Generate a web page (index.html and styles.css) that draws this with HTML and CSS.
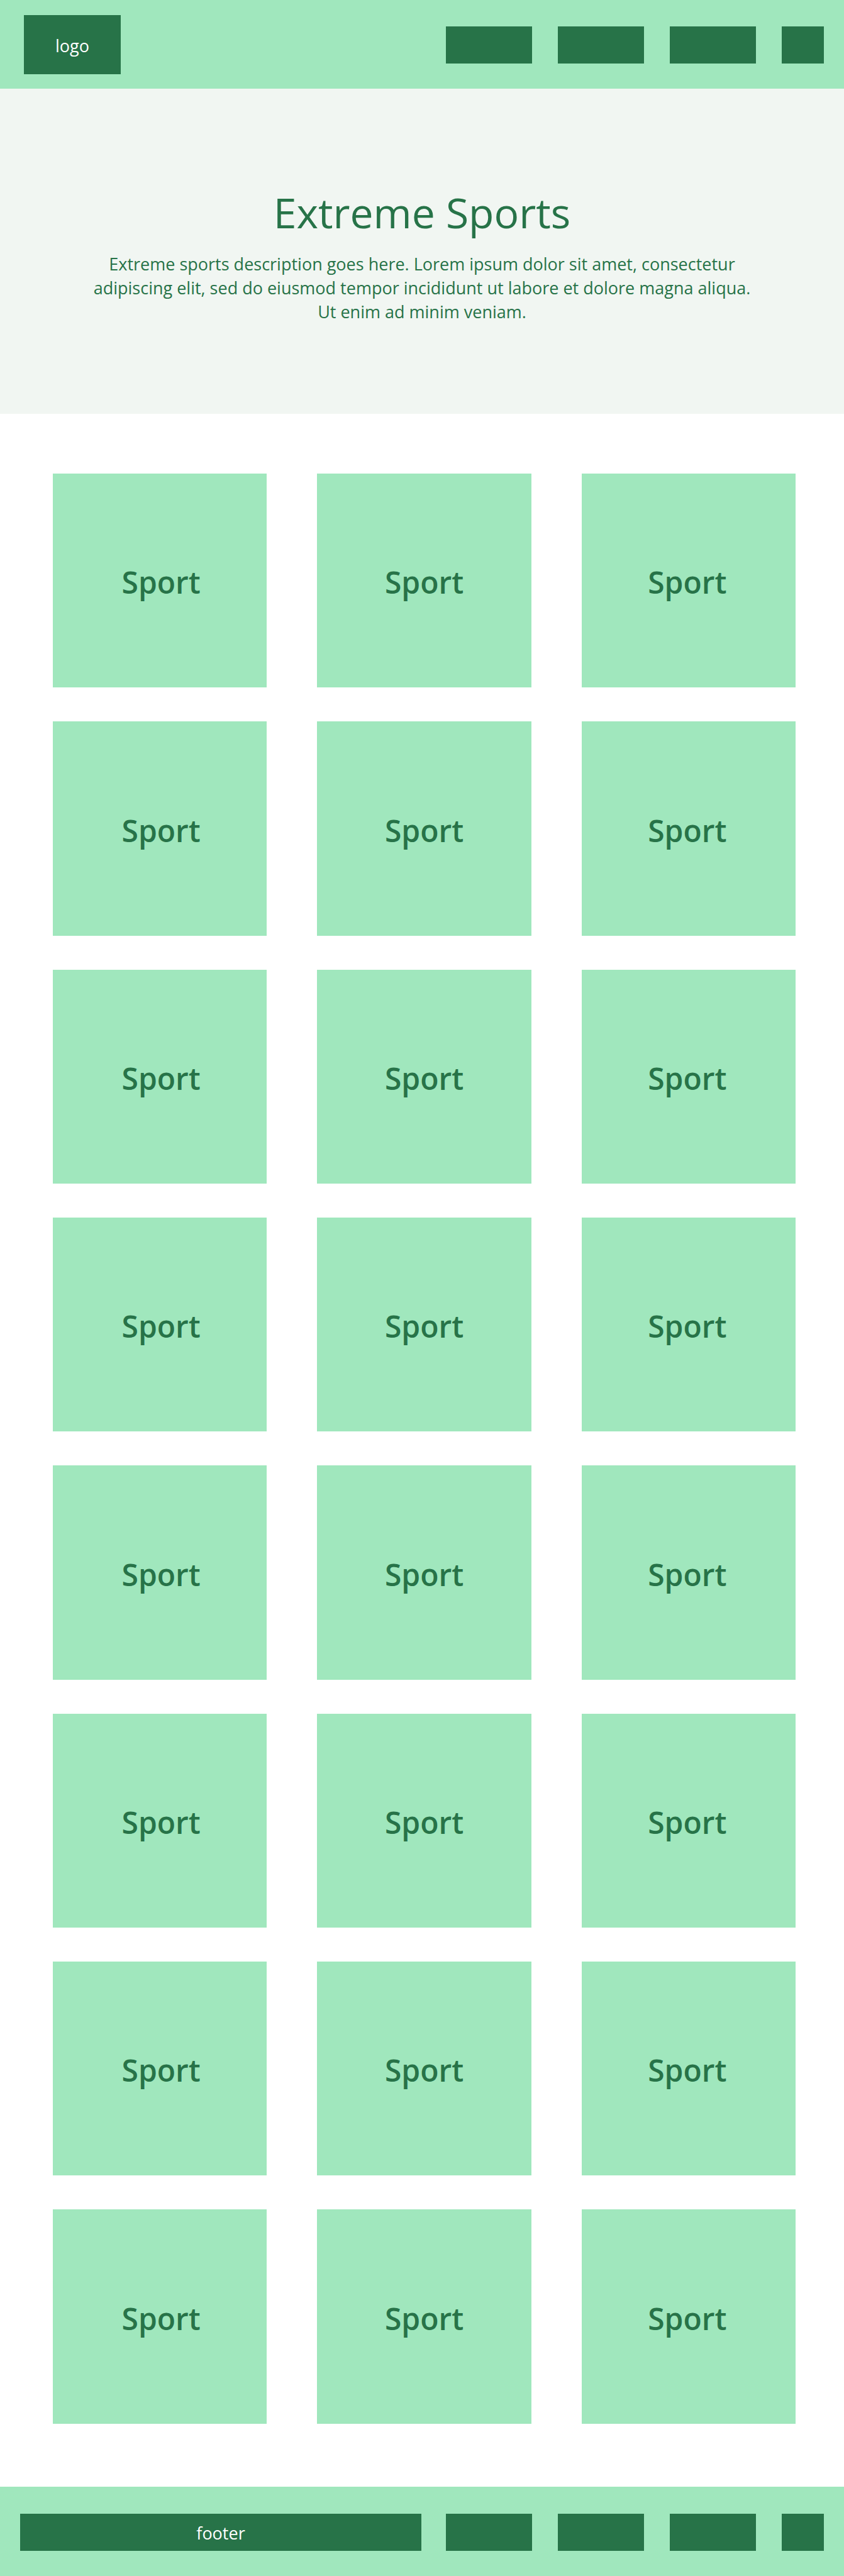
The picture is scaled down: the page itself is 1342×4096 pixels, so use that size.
FILE: index.html
```html
<!DOCTYPE html>
<html lang="en">
<head>
<meta charset="utf-8">
<meta name="viewport" content="width=device-width, initial-scale=1">
<title>Extreme Sports</title>
<link rel="stylesheet" href="styles.css">
</head>
<body>
<header class="bar">
  <a class="logo" href="#">logo</a>
  <nav class="nav">
    <a class="nav-item" href="#"></a>
    <a class="nav-item" href="#"></a>
    <a class="nav-item" href="#"></a>
    <a class="nav-item nav-item-small" href="#"></a>
  </nav>
</header>
<main>
  <section class="hero">
    <h1 class="hero-title">Extreme Sports</h1>
    <p class="hero-text">Extreme sports description goes here. Lorem ipsum dolor sit amet, consectetur<br>adipiscing elit, sed do eiusmod tempor incididunt ut labore et dolore magna aliqua.<br>Ut enim ad minim veniam.</p>
  </section>
  <section class="grid">
    <a class="card" href="#">Sport</a>
    <a class="card" href="#">Sport</a>
    <a class="card" href="#">Sport</a>
    <a class="card" href="#">Sport</a>
    <a class="card" href="#">Sport</a>
    <a class="card" href="#">Sport</a>
    <a class="card" href="#">Sport</a>
    <a class="card" href="#">Sport</a>
    <a class="card" href="#">Sport</a>
    <a class="card" href="#">Sport</a>
    <a class="card" href="#">Sport</a>
    <a class="card" href="#">Sport</a>
    <a class="card" href="#">Sport</a>
    <a class="card" href="#">Sport</a>
    <a class="card" href="#">Sport</a>
    <a class="card" href="#">Sport</a>
    <a class="card" href="#">Sport</a>
    <a class="card" href="#">Sport</a>
    <a class="card" href="#">Sport</a>
    <a class="card" href="#">Sport</a>
    <a class="card" href="#">Sport</a>
    <a class="card" href="#">Sport</a>
    <a class="card" href="#">Sport</a>
    <a class="card" href="#">Sport</a>
  </section>
</main>
<footer class="bar bar-footer">
  <div class="footer-label">footer</div>
  <nav class="nav">
    <a class="nav-item" href="#"></a>
    <a class="nav-item" href="#"></a>
    <a class="nav-item" href="#"></a>
    <a class="nav-item nav-item-small" href="#"></a>
  </nav>
</footer>
</body>
</html>
```
FILE: styles.css
```css
:root {
  --light: #a0e7bd;
  --dark: #277348;
  --pale: #f1f6f2;
}

* {
  box-sizing: border-box;
}

body {
  margin: 0;
  background: #fff;
  color: var(--dark);
  font-family: "Segoe UI", "Open Sans", sans-serif;
  font-size: 27px;
  line-height: 38px;
}

a {
  color: inherit;
  text-decoration: none;
}

.bar {
  display: flex;
  align-items: center;
  justify-content: space-between;
  gap: 39px;
  padding: 24px 32px 23px 38px;
  background: var(--light);
}

.bar-footer {
  padding: 43px 32px 40px;
}

.logo,
.footer-label {
  display: flex;
  align-items: center;
  justify-content: center;
  padding-top: 4px;
  background: var(--dark);
  color: #fff;
}

.logo {
  width: 154px;
  height: 94px;
}

.footer-label {
  flex: 1;
  height: 59px;
}

.nav {
  display: flex;
  gap: 41px;
}

.nav-item {
  width: 137px;
  height: 59px;
  background: var(--dark);
}

.nav-item-small {
  width: 67px;
}

.hero {
  padding: 148px 40px 143px;
  background: var(--pale);
  text-align: center;
}

.hero-title {
  margin: 0 0 16px;
  font-size: 66px;
  font-weight: 400;
  line-height: 96px;
}

.hero-text {
  margin: 0;
}

.grid {
  display: grid;
  grid-template-columns: repeat(3, 1fr);
  gap: 54px 80px;
  padding: 95px 77px 100px 84px;
}

.card {
  display: flex;
  align-items: center;
  justify-content: center;
  aspect-ratio: 1;
  padding-top: 6px;
  background: var(--light);
  font-size: 48px;
  font-weight: 600;
}

/* Labels of the outer columns lean slightly towards the middle. */
.card:nth-child(3n + 1) {
  padding-left: 4px;
}

.card:nth-child(3n) {
  padding-right: 4px;
}
```
